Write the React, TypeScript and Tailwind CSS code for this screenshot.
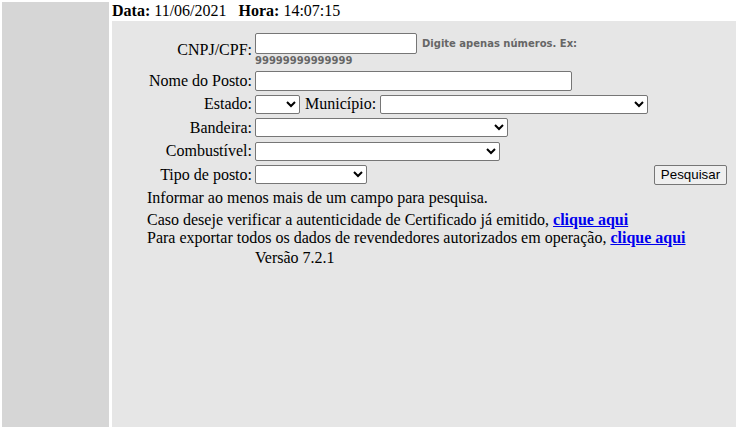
import React from "react";

const serif = { fontFamily: '"Liberation Serif", "Times New Roman", serif' };

function Sel({ w }: { w: string }) {
  return (
    <select
      className={`${w} h-[19px] border border-[#767676] rounded-[2px] bg-white text-[13px] text-black`}
      style={{ fontFamily: '"Liberation Sans", Arial, sans-serif' }}
    >
      <option></option>
    </select>
  );
}

function Label({ children }: { children: React.ReactNode }) {
  return <div className="w-[105px] shrink-0 text-right whitespace-nowrap">{children}</div>;
}

export default function App() {
  return (
    <div
      className="w-[739px] h-[433px] bg-white flex gap-[3px] p-[2px] text-[16px] leading-[18px] text-black"
      style={serif}
    >
      <div className="w-[107px] h-[425px] bg-[#d6d6d6] shrink-0" />
      <div className="w-[624px] h-[425px] flex flex-col">
        <div className="h-[19px] whitespace-pre">
          <b>Data:</b> 11/06/2021{"\u00a0\u00a0\u00a0"}<b>Hora:</b> 14:07:15
        </div>
        <div className="flex-1 bg-[#e6e6e6] pl-[35px] pt-[10px]">
          {/* CNPJ row */}
          <div className="flex items-center h-[38px] gap-[3px]">
            <Label>CNPJ/CPF:</Label>
            <div
              className="flex flex-col text-[10px] font-bold text-[#666666] leading-[13px]"
              style={{ fontFamily: 'Verdana, "DejaVu Sans", sans-serif' }}
            >
              <div className="flex items-center">
                <input className="w-[162px] h-[21px] border border-[#767676] rounded-[2px] bg-white" />
                <span className="ml-[5px]">Digite apenas números. Ex:</span>
              </div>
              <div>99999999999999</div>
            </div>
          </div>
          {/* Nome */}
          <div className="flex items-center h-[23px] gap-[3px]">
            <Label>Nome do Posto:</Label>
            <input className="w-[317px] h-[20px] border border-[#767676] rounded-[2px] bg-white" />
          </div>
          {/* Estado */}
          <div className="flex items-center h-[24px] gap-[3px]">
            <Label>Estado:</Label>
            <Sel w="w-[45px]" />
            <span className="ml-[2px] mr-[1px]">Município:</span>
            <Sel w="w-[268px]" />
          </div>
          {/* Bandeira */}
          <div className="flex items-center h-[23px] gap-[3px]">
            <Label>Bandeira:</Label>
            <Sel w="w-[253px]" />
          </div>
          {/* Combustível */}
          <div className="flex items-center h-[24px] gap-[3px]">
            <Label>Combustível:</Label>
            <Sel w="w-[245px]" />
          </div>
          {/* Tipo */}
          <div className="flex items-center h-[23px] gap-[3px]">
            <Label>Tipo de posto:</Label>
            <Sel w="w-[112px]" />
            <button
              className="ml-[284px] w-[73px] h-[20px] border border-[#767676] rounded-[2px] bg-[#efefef] text-[13.33px] leading-[16px] text-black"
              style={{ fontFamily: '"Liberation Sans", Arial, sans-serif' }}
            >
              Pesquisar
            </button>
          </div>
          <div className="mt-[3px] h-[18px]">Informar ao menos mais de um campo para pesquisa.</div>
          <div className="mt-[4px] h-[18px]">
            Caso deseje verificar a autenticidade de Certificado já emitido,{" "}
            <a href="#" className="font-bold underline text-[#0000ee]">clique aqui</a>
          </div>
          <div className="h-[18px]">
            Para exportar todos os dados de revendedores autorizados em operação,{" "}
            <a href="#" className="font-bold underline text-[#0000ee]">clique aqui</a>
          </div>
          <div className="mt-[2px] h-[18px] pl-[108px]">Versão 7.2.1</div>
        </div>
      </div>
    </div>
  );
}
